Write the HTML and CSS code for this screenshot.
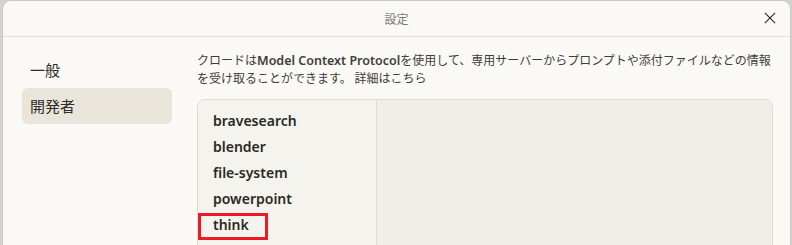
FILE: index.html
```html
<!DOCTYPE html>
<html lang="ja">
<head>
    <meta charset="UTF-8">
    <title>設定</title>
    <link rel="stylesheet" href="styles.css">
</head>
<body>
    <div class="dialog">
        <div class="header">
            <span class="title">設定</span>
            <svg class="close" width="14" height="14" viewBox="0 0 14 14">
                <path d="M1 1 L13 13 M13 1 L1 13" stroke="#222" stroke-width="1.2" fill="none"/>
            </svg>
        </div>
        <div class="body">
            <div class="nav">
                <div class="nav-item">一般</div>
                <div class="nav-item active">開発者</div>
            </div>
            <div class="main">
                <p class="desc">クロードは<span class="latin">Model Context Protocol</span>を使用して、専用サーバーからプロンプトや添付ファイルなどの情報を受け取ることができます。 詳細はこちら</p>
                <div class="panel">
                    <ul class="servers">
                        <li>bravesearch</li>
                        <li>blender</li>
                        <li>file-system</li>
                        <li>powerpoint</li>
                        <li class="marked">think</li>
                    </ul>
                    <div class="detail"></div>
                </div>
            </div>
        </div>
    </div>
</body>
</html>
```

FILE: styles.css
```css
body {
    margin: 0;
    background: #d2d2d0;
    font-family: "Noto Sans CJK JP", sans-serif;
    overflow: hidden;
}
.dialog {
    margin-left: 2px;
    width: 787px;
    height: 260px;
    background: #faf9f5;
    border: 1px solid #c9c8c3;
    border-radius: 9px 9px 0 0;
}
.header {
    height: 35px;
    border-bottom: 1px solid #e2e0da;
    display: flex;
    align-items: center;
    justify-content: center;
    position: relative;
}
.title {
    font-size: 12px;
    color: #7a7975;
}
.close {
    position: absolute;
    right: 14px;
    top: 11px;
    width: 12px;
    height: 12px;
}
.body {
    display: flex;
    padding: 0 0 0 19px;
}
.nav {
    width: 150px;
    padding-top: 15px;
}
.nav-item {
    height: 36px;
    line-height: 36px;
    padding-left: 8px;
    font-size: 15px;
    color: #2d2c29;
    border-radius: 6px;
}
.nav-item.active {
    background: #e9e5db;
}
.main {
    margin-left: 25px;
    width: 576px;
}
.desc {
    margin: 14px 0 0 0;
    font-size: 12px;
    line-height: 17px;
    color: #3f3e3a;
}
.latin {
    font-family: "Noto Sans", sans-serif;
    font-weight: 600;
    font-size: 12.5px;
}
.panel {
    margin-top: 13px;
    display: flex;
    height: 160px;
    border: 1px solid #dddad2;
    border-radius: 8px;
    overflow: hidden;
}
.servers {
    list-style: none;
    margin: 0;
    padding: 8px 0 0 0;
    width: 178px;
    background: #f5f3ee;
    border-right: 1px solid #e0ddd5;
}
.servers li {
    height: 26px;
    line-height: 26px;
    padding-left: 15px;
    font-family: "Noto Sans", sans-serif;
    font-weight: 600;
    font-size: 14px;
    color: #2b2924;
    position: relative;
}
.servers li.marked::after {
    content: "";
    position: absolute;
    left: 0;
    top: 1px;
    width: 64px;
    height: 21px;
    border: 3px solid #ec1c24;
}
.detail {
    flex: 1;
    background: #f0eee7;
}
```
